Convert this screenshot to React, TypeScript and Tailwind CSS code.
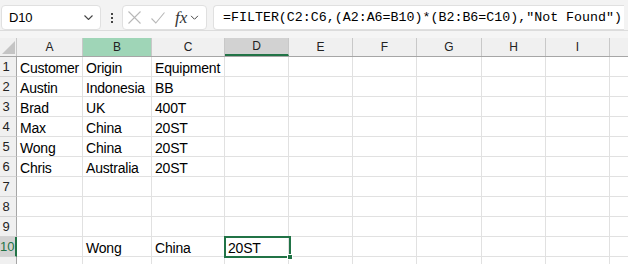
import React from "react";

interface Col {
  label: string;
  width: string;
}

const columns: Col[] = [
  { label: "A", width: "w-[66px]" },
  { label: "B", width: "w-[69px]" },
  { label: "C", width: "w-[73px]" },
  { label: "D", width: "w-[64px]" },
  { label: "E", width: "w-[64px]" },
  { label: "F", width: "w-[64px]" },
  { label: "G", width: "w-[65px]" },
  { label: "H", width: "w-[64px]" },
  { label: "I", width: "w-[64px]" },
  { label: "", width: "w-[64px]" },
];

const rows: string[][] = [
  ["Customer", "Origin", "Equipment"],
  ["Austin", "Indonesia", "BB"],
  ["Brad", "UK", "400T"],
  ["Max", "China", "20ST"],
  ["Wong", "China", "20ST"],
  ["Chris", "Australia", "20ST"],
  [],
  [],
  [],
  ["", "Wong", "China", "20ST"],
  [],
];

const cellFont = { fontFamily: '"Liberation Sans", Arial, sans-serif', letterSpacing: "-0.2px" };

const Chevron = ({ className }: { className?: string }) => (
  <svg className={className} width="9" height="5" viewBox="0 0 9 5" fill="none">
    <polyline points="0.5,0.5 4.5,4.5 8.5,0.5" stroke="#444" strokeWidth="1.1" />
  </svg>
);

const FormulaBar = () => (
  <div className="flex h-[30px] items-end bg-[#f3f3f3] pl-[1px]">
    <div className="flex h-[25px] w-[100px] items-center justify-between rounded-[4px] border border-[#e0e0e0] bg-white pl-[7px] pr-[7px]">
      <span className="text-[13px] text-black" style={cellFont}>
        D10
      </span>
      <Chevron />
    </div>
    <div className="flex h-[25px] w-[21px] flex-col items-center justify-center gap-[2px]">
      <span className="h-[2px] w-[2px] bg-[#444]" />
      <span className="h-[2px] w-[2px] bg-[#444]" />
      <span className="h-[2px] w-[2px] bg-[#444]" />
    </div>
    <div className="flex h-[25px] w-[85px] items-center rounded-[4px] border border-[#e0e0e0] bg-white pl-[5px]">
      <svg width="13" height="13" viewBox="0 0 13 13" fill="none">
        <path d="M0.5 0.5 L12.5 12.5 M12.5 0.5 L0.5 12.5" stroke="#b8b8b8" strokeWidth="1.1" />
      </svg>
      <svg className="ml-[10px]" width="14" height="12" viewBox="0 0 14 12" fill="none">
        <polyline points="0.5,6.5 4.8,11 13.5,0.5" stroke="#b8b8b8" strokeWidth="1.1" />
      </svg>
      <span
        className="ml-[10px] text-[17px] italic leading-none text-[#333]"
        style={{ fontFamily: '"Liberation Serif", "Times New Roman", serif' }}
      >
        fx
      </span>
      <Chevron className="ml-[3px] scale-90" />
    </div>
    <div className="ml-[6px] mr-[4px] flex h-[25px] flex-1 items-center rounded-l-[4px] border border-r-0 border-[#e0e0e0] bg-white pl-[9px]">
      <span
        className="whitespace-nowrap text-[13.3px] text-black"
        style={{ fontFamily: '"Liberation Mono", "Courier New", monospace' }}
      >
        =FILTER(C2:C6,(A2:A6=B10)*(B2:B6=C10),"Not Found")
      </span>
    </div>
  </div>
);

const HeaderRow = () => (
  <div className="flex h-[19px] border-b border-[#a6a6a6] bg-[#f0f0f0]">
    <div className="flex w-[17px] shrink-0 items-end justify-center border-r border-[#c8c8c8] pb-[2px]">
      <svg width="13" height="13" viewBox="0 0 13 13">
        <polygon points="13,0 13,13 0,13" fill="#c4c4c4" />
      </svg>
    </div>
    {columns.map((col, i) => {
      const active = col.label === "D";
      const hover = col.label === "B";
      return (
        <div
          key={i}
          className={`${col.width} flex shrink-0 items-center justify-center border-r border-[#c8c8c8] text-[12px] text-[#222] ${
            hover ? "bg-[#9fd5b7]" : active ? "border-b-2 border-b-[#217346] bg-[#d2d2d2]" : ""
          }`}
          style={{ fontFamily: '"Liberation Sans", Arial, sans-serif' }}
        >
          {col.label}
        </div>
      );
    })}
  </div>
);

const SheetRow = ({ index, values }: { index: number; values: string[] }) => {
  const activeRow = index === 10;
  return (
    <div className="flex h-[20px]">
      <div
        className={`flex w-[17px] shrink-0 border-b border-[#d4d4d4] ${
          activeRow ? "border-r-2 border-r-[#217346] bg-[#d2d2d2] text-[#217346]" : "border-r border-r-[#a6a6a6] bg-[#f0f0f0] text-[#222]"
        }`}
      >
        <span
          className="w-[12px] text-center text-[13px] leading-[20px]"
          style={{ fontFamily: '"Liberation Sans", Arial, sans-serif' }}
        >
          {index <= 10 ? index : ""}
        </span>
      </div>
      {columns.map((col, i) => {
        const isActive = activeRow && col.label === "D";
        return (
          <div
            key={i}
            className={`${col.width} relative shrink-0 whitespace-nowrap border-b border-r border-[#e1e1e1] bg-white pl-[3px] pt-[2px] text-[14px] leading-[18px] text-black`}
            style={cellFont}
          >
            {values[i] ?? ""}
            {isActive && (
              <div className="absolute -left-[1px] -top-[1px] z-10 h-[22px] w-[67px] border-2 border-[#217346]">
                <div className="absolute -bottom-[4px] -right-[4px] h-[6px] w-[6px] border border-white bg-[#217346]" />
              </div>
            )}
          </div>
        );
      })}
    </div>
  );
};

export default function App() {
  return (
    <div className="h-[264px] w-[628px] overflow-hidden bg-white">
      <FormulaBar />
      <div className="h-[8px] border-t border-[#dcdcdc] bg-[#f5f5f5]" />
      <HeaderRow />
      {rows.map((values, i) => (
        <SheetRow key={i} index={i + 1} values={values} />
      ))}
    </div>
  );
}
